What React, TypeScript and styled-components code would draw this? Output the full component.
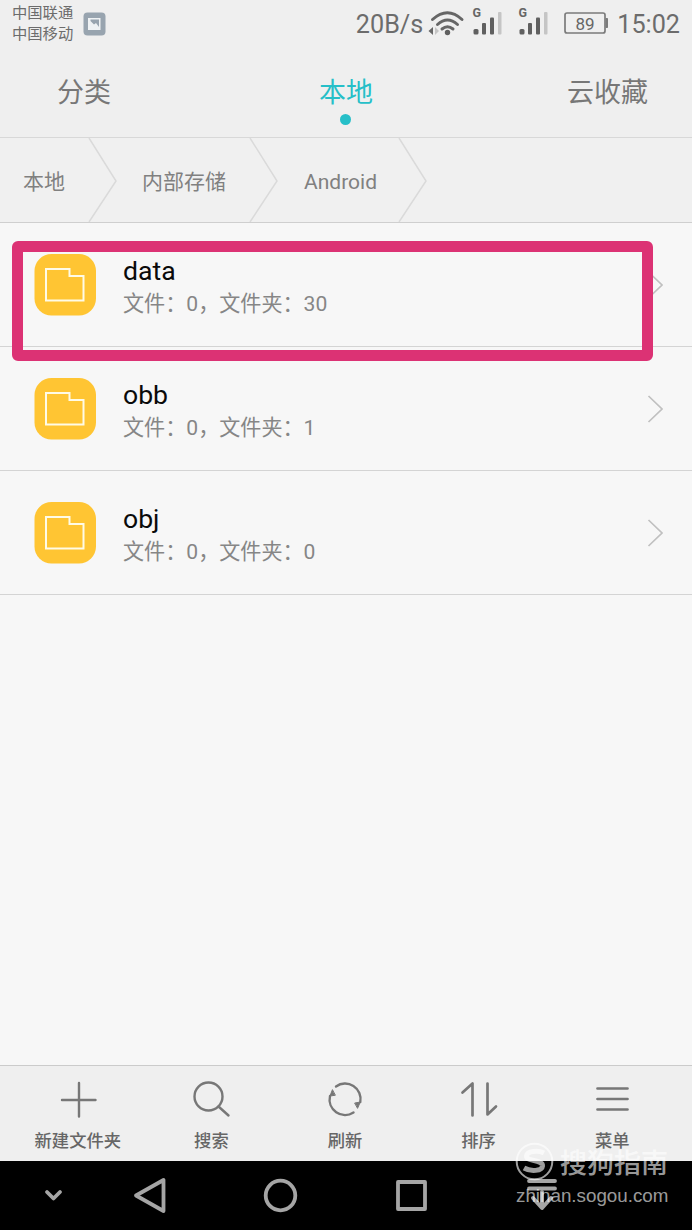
import React from 'react';
import styled, { createGlobalStyle } from 'styled-components';

const GlobalStyle = createGlobalStyle`
  * { box-sizing: border-box; }
  body {
    margin: 0;
    background: #f7f7f7;
    font-family: Roboto, 'Noto Sans CJK SC', sans-serif;
  }
  svg { display: block; flex: none; }
`;

const Screen = styled.div`
  position: relative;
  width: 692px;
  height: 1230px;
  overflow: hidden;
  display: flex;
  flex-direction: column;
  background: #f7f7f7;
`;

const StatusBar = styled.header`
  height: 48px;
  display: flex;
  align-items: center;
  padding: 0 12px;
  background: #efefef;
  color: #6c6c6c;
`;

const Carriers = styled.div`
  width: 71px;
  font-size: 15.3px;
  line-height: 21px;
  white-space: pre-line;
`;

const StatusText = styled.span<{ $push?: boolean }>`
  margin-left: ${(p) => (p.$push ? 'auto' : '0')};
  padding-top: 2px;
  font-size: 25.2px;
  line-height: 46px;
  white-space: nowrap;
`;

const StatusIcons = styled.div`
  display: flex;
  width: 194px;
  height: 48px;
`;

const Tabs = styled.nav`
  height: 90px;
  display: grid;
  grid-template-columns: 1fr 1fr 1fr;
  padding: 25px 44px 0;
  background: #efefef;
  border-bottom: 1px solid #d8d8d8;
`;

const Tab = styled.div<{ $active?: boolean; $side?: 'start' | 'end' }>`
  display: flex;
  flex-direction: column;
  align-items: ${(p) => (p.$side ? `flex-${p.$side}` : 'center')};
  padding-left: ${(p) => (p.$side === 'start' ? '13px' : '0')};
  font-size: 27px;
  line-height: 40px;
  color: ${(p) => (p.$active ? '#26bfc8' : '#777')};
`;

const Dot = styled.i`
  width: 11px;
  height: 11px;
  margin-top: 1px;
  border-radius: 50%;
  background: #26bfc8;
`;

const Crumbs = styled.div`
  height: 85px;
  display: flex;
  background: #f0f0f0;
  border-bottom: 1px solid #cfcfcf;
`;

const Crumb = styled.div<{ $width: number; $indent: number }>`
  width: ${(p) => p.$width}px;
  padding-left: ${(p) => p.$indent}px;
  display: flex;
  justify-content: space-between;
  font-size: 21px;
  line-height: 89px;
  color: #808080;
  white-space: nowrap;
`;

const List = styled.main`
  flex: 1;
`;

const Row = styled.div`
  height: 124px;
  display: flex;
  align-items: center;
  padding: 0 29px 0 34px;
  border-bottom: 1px solid #d4d4d4;
`;

const RowText = styled.div`
  flex: 1;
  margin-left: 27px;
  padding-top: 5px;
`;

const Name = styled.div`
  font-size: 26.6px;
  line-height: 32px;
  color: #0a0a0a;
`;

const Detail = styled.div`
  font-size: 21.1px;
  line-height: 33px;
  color: #868686;
  white-space: nowrap;
`;

const Highlight = styled.div`
  position: absolute;
  left: 12px;
  top: 241px;
  width: 641px;
  height: 120px;
  border: 11px solid #dc3274;
  border-radius: 6px;
`;

const Toolbar = styled.footer`
  height: 96px;
  display: flex;
  padding: 0 13px 0 11px;
  background: #efefef;
  border-top: 1px solid #cbcbcb;
`;

const Tool = styled.div`
  flex: 1;
  display: flex;
  flex-direction: column;
  align-items: center;
  padding-top: 13px;
  font-size: 17.3px;
  font-weight: 500;
  line-height: 26px;
  color: #666;
  white-space: nowrap;
  svg { margin-bottom: 9px; }
`;

const NavBar = styled.div`
  height: 69px;
  background: #000;
`;

const Watermark = styled.div`
  position: absolute;
  left: 515px;
  top: 1142px;
  width: 160px;
  color: rgba(255, 255, 255, 0.62);
`;

const Brand = styled.div`
  display: flex;
  align-items: center;
  gap: 6px;
  height: 40px;
  font-size: 27px;
  font-weight: 500;
  line-height: 27px;
  svg { margin-bottom: 1px; }
`;

const BrandName = styled.span`
  padding-top: 5px;
`;

const Site = styled.div`
  margin-top: 1px;
  padding-left: 1px;
  font-family: 'Liberation Sans', sans-serif;
  font-size: 18.8px;
  line-height: 25px;
`;

const PhotoIcon = () => (
  <svg width="23" height="24" viewBox="0 0 23 24">
    <rect x="0.5" y="0.5" width="22" height="23" rx="4" fill="#98a4af" />
    <rect x="5" y="6" width="12.5" height="12" fill="#eff2f4" />
    <path d="M7.500 7.500h8.500v7.500l-3-4-2 1.500L7.500 9z" fill="#98a4af" />
  </svg>
);

const Signal = ({ x }: { x: number }) => (
  <g transform={`translate(${x} 0)`}>
    <text x="-0.500" y="17" fontSize="12.500" fontWeight="700" fill="#666">G</text>
    <rect x="0.500" y="29" width="5" height="5.500" rx="1.500" fill="#606060" />
    <rect x="9" y="23" width="4" height="11.500" rx="1" fill="#606060" />
    <rect x="17" y="17.500" width="4" height="17" rx="1" fill="#606060" />
    <rect x="25" y="12" width="3.500" height="22.500" rx="1" fill="#c5c5c5" />
  </g>
);

/* Wi-Fi, both SIM signals and the battery share one strip */
const StatusGlyphs = () => (
  <svg width="194" height="48" viewBox="423.5 0 194 48">
    <g fill="none" stroke="#666" strokeWidth="3" strokeLinecap="round">
      <path d="M433 19.500Q448 6 462.500 19.500" />
      <path d="M438 24.500Q448 15.500 458 24.500" />
      <path d="M442.500 29Q448 24.500 453.500 29" />
    </g>
    <circle cx="448" cy="32.500" r="2.700" fill="#606060" />
    <path d="M433.500 27v8l-4.500-4z" fill="#666" />
    <path d="M435.500 27v8l4-4z" fill="#c5c5c5" />
    <Signal x={473.5} />
    <Signal x={519.5} />
    <rect x="565.500" y="13" width="40" height="20" rx="2" fill="none" stroke="#7b7b7b" strokeWidth="1.700" />
    <rect x="606" y="18" width="2.500" height="10" rx="0.800" fill="#7b7b7b" />
    <text x="585.500" y="29.700" fontSize="17" textAnchor="middle" fill="#666">89</text>
  </svg>
);

const CrumbArrow = () => (
  <svg width="29" height="84" viewBox="0 0 29 84">
    <path d="M1 0L28 43L1 84" fill="none" stroke="#dadada" strokeWidth="1.500" />
  </svg>
);

const FolderIcon = () => (
  <svg width="62" height="62" viewBox="0 0 62 62">
    <rect x="0.500" width="61.500" height="61.500" rx="17" fill="#ffc533" />
    <path d="M12 15H35.500V22H49.500V46.500H12Z" fill="none" stroke="#fffbe6" strokeWidth="2" />
  </svg>
);

const Chevron = () => (
  <svg width="16" height="30" viewBox="0 0 16 30">
    <path d="M1.500 2L15 15L1.500 28" fill="none" stroke="#c0c0c0" strokeWidth="1.700" />
  </svg>
);

const ToolIcon = ({ children }: { children: React.ReactNode }) => (
  <svg width="40" height="40" viewBox="0 0 40 40" fill="none" stroke="#777" strokeWidth="2.400" strokeLinecap="round">
    {children}
  </svg>
);

const tools = [
  { label: '新建文件夹', icon: <path d="M21 4V37.500M4 21H37.500" /> },
  { label: '搜索', icon: <><circle cx="17.500" cy="17.500" r="14" /><path d="M27.500 27.500L37.500 36.500" /></> },
  {
    label: '刷新',
    icon: (
      <>
        <path d="M11 7.500A15.500 15.500 0 0 1 35.300 23M28.500 33.500A15.500 15.500 0 0 1 5 17" />
        <path d="M7.300 11L5 17L10 16.300Z M30 24L35.300 23L32.700 29Z" fill="#777" strokeWidth="1" />
      </>
    ),
  },
  {
    label: '排序',
    icon: <path d="M3.500 13.500L13.500 4.500V36.500M28.500 4.500V35.500L37 27.500" strokeWidth="2.700" strokeLinejoin="round" />,
  },
  { label: '菜单', icon: <path d="M5.500 9.500H35.500M5.500 20H35.500M5.500 30.500H35.500" strokeWidth="2.700" /> },
];

const folders = [
  { name: 'data', count: 30 },
  { name: 'obb', count: 1 },
  { name: 'obj', count: 0 },
];

export default function App() {
  return (
    <>
      <GlobalStyle />
      <Screen>
        <StatusBar>
          <Carriers>{'中国联通\n中国移动'}</Carriers>
          <PhotoIcon />
          <StatusText $push>20B/s</StatusText>
          <StatusIcons><StatusGlyphs /></StatusIcons>
          <StatusText>15:02</StatusText>
        </StatusBar>
        <Tabs>
          <Tab $side="start">分类</Tab>
          <Tab $active>本地<Dot /></Tab>
          <Tab $side="end">云收藏</Tab>
        </Tabs>
        <Crumbs>
          <Crumb $width={117} $indent={23}>本地<CrumbArrow /></Crumb>
          <Crumb $width={161} $indent={25}>内部存储<CrumbArrow /></Crumb>
          <Crumb $width={149} $indent={26}>Android<CrumbArrow /></Crumb>
        </Crumbs>
        <List>
          {folders.map((f) => (
            <Row key={f.name}>
              <FolderIcon />
              <RowText>
                <Name>{f.name}</Name>
                <Detail>文件：0，文件夹：{f.count}</Detail>
              </RowText>
              <Chevron />
            </Row>
          ))}
        </List>
        <Toolbar>
          {tools.map((t) => (
            <Tool key={t.label}>
              <ToolIcon>{t.icon}</ToolIcon>
              {t.label}
            </Tool>
          ))}
        </Toolbar>
        <NavBar>
          <svg width="692" height="69" viewBox="0 1161 692 69" fill="none" stroke="#a5a5a5" strokeWidth="3.800" strokeLinejoin="round" strokeLinecap="round">
            <path d="M47 1192L53.500 1198.500L60 1192" />
            <path d="M163.500 1180V1211L136 1195.500Z" />
            <circle cx="280.500" cy="1195.500" r="14.800" />
            <rect x="398" y="1182" width="27" height="27" />
            <path d="M529 1181H555M529 1188.500H555" />
            <path d="M542 1192V1206M533 1198L542 1208L551 1198" strokeWidth="4" />
          </svg>
        </NavBar>
        <Highlight />
        <Watermark>
          <Brand>
            <svg width="39" height="39" viewBox="0 0 39 39" fill="none" stroke="currentColor">
              <circle cx="19.500" cy="19.500" r="17.800" strokeWidth="2" />
              <path d="M29 11C23 8 12 9 11.500 14C11 20 28 17 27.500 24C27 29 16 30 9 26" strokeWidth="5" />
            </svg>
            <BrandName>搜狗指南</BrandName>
          </Brand>
          <Site>zhinan.sogou.com</Site>
        </Watermark>
      </Screen>
    </>
  );
}
